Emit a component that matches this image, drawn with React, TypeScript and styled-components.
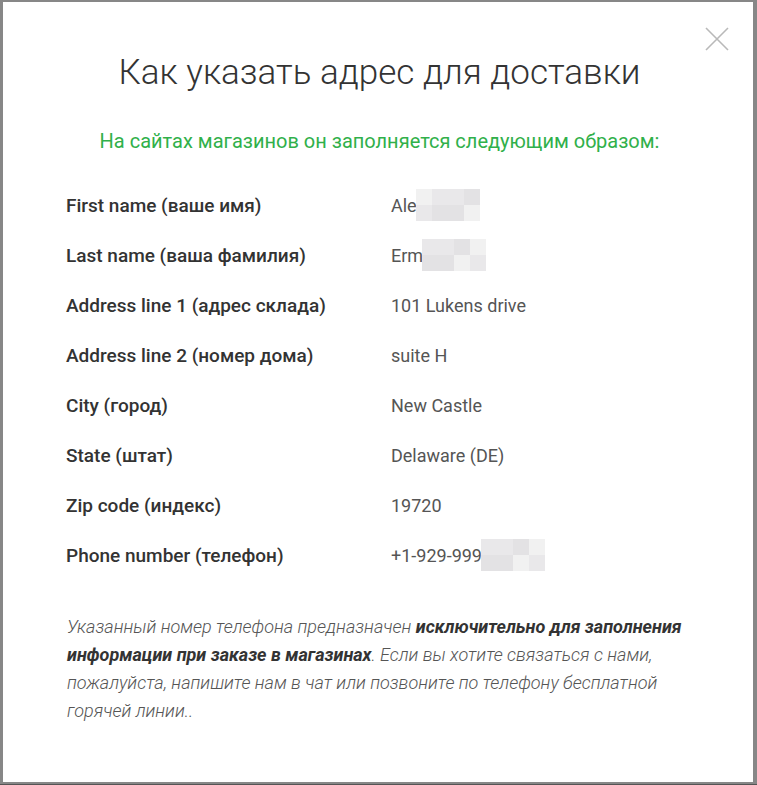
import React from 'react';
import styled, { createGlobalStyle } from 'styled-components';

const GlobalStyle = createGlobalStyle`
    html, body {
        margin: 0;
        padding: 0;
        background: #878787;
        font-family: Roboto, 'Liberation Sans', sans-serif;
    }
`;

type Field = { label: string; value: string; hidden?: number[] };

const FIELDS: Field[] = [
    { label: 'First name (ваше имя)', value: 'Ale', hidden: [0, 1, 1, 2] },
    { label: 'Last name (ваша фамилия)', value: 'Erm', hidden: [1, 1, 2, 0] },
    { label: 'Address line 1 (адрес склада)', value: '101 Lukens drive' },
    { label: 'Address line 2 (номер дома)', value: 'suite H' },
    { label: 'City (город)', value: 'New Castle' },
    { label: 'State (штат)', value: 'Delaware (DE)' },
    { label: 'Zip code (индекс)', value: '19720' },
    { label: 'Phone number (телефон)', value: '+1-929-999', hidden: [1, 1, 2, 0] },
];

const SHADES = ['#f1f1f1', '#e9e8ea', '#e3e2e4'];

const App = (): JSX.Element => {
    return (
        <Backdrop>
            <GlobalStyle />
            <Modal>
                <CloseButton aria-label="Закрыть">
                    <svg width="24" height="24" viewBox="0 0 24 24">
                        <path d="M1 1 L23 23 M23 1 L1 23" stroke="#b9b9b9" strokeWidth="1.6" fill="none" />
                    </svg>
                </CloseButton>
                <Title>Как указать адрес для доставки</Title>
                <Subtitle>На сайтах магазинов он заполняется следующим образом:</Subtitle>
                <Table>
                    {FIELDS.map((f) => (
                        <Row key={f.label}>
                            <Label>{f.label}</Label>
                            <Value>
                                {f.value}
                                {f.hidden && (
                                    <Blur>
                                        {f.hidden.map((s, i) => (
                                            <BlurCell key={i} shade={SHADES[s]} />
                                        ))}
                                        {f.hidden.map((s, i) => (
                                            <BlurCell key={'b' + i} shade={SHADES[(s + 1) % 3]} />
                                        ))}
                                    </Blur>
                                )}
                            </Value>
                        </Row>
                    ))}
                </Table>
                <Note>
                    Указанный номер телефона предназначен <b>исключительно для заполнения информации при заказе в магазинах</b>. Если вы хотите связаться с нами, пожалуйста, напишите нам в чат или позвоните по телефону бесплатной горячей линии..
                </Note>
            </Modal>
        </Backdrop>
    );
};

export default App;

const Backdrop = styled.div`
    width: 757px;
    height: 785px;
    padding: 2px 4px 2px 3px;
    box-sizing: border-box;
    border-bottom: 1px solid #555;
`;

const Modal = styled.div`
    position: relative;
    height: 100%;
    background: #fff;
    padding: 49px 60px 0 63px;
    box-sizing: border-box;
`;

const CloseButton = styled.button`
    position: absolute;
    top: 25px;
    right: 24px;
    padding: 0;
    border: none;
    background: none;
    line-height: 0;
    cursor: pointer;
`;

const Title = styled.h1`
    margin: 0 -20px;
    text-align: center;
    font-size: 35px;
    font-weight: 300;
    line-height: 44px;
    color: #333;
`;

const Subtitle = styled.p`
    margin: 34px -20px 0;
    text-align: center;
    font-size: 20px;
    line-height: 24px;
    color: #30b04a;
`;

const Table = styled.div`
    margin-top: 27px;
    display: flex;
    flex-direction: column;
`;

const Row = styled.div`
    display: grid;
    grid-template-columns: 325px 1fr;
    align-items: center;
    height: 50px;
`;

const Label = styled.span`
    font-size: 19px;
    font-weight: 500;
    color: #333;
`;

const Value = styled.span`
    display: flex;
    align-items: center;
    font-size: 18px;
    color: #555;
`;

const Blur = styled.span`
    display: grid;
    grid-template-columns: repeat(4, 16px);
    grid-auto-rows: 16px;
    margin-left: -1px;
`;

const BlurCell = styled.span<{ shade: string }>`
    background: ${(p) => p.shade};
`;

const Note = styled.p`
    margin: 33px 0 0 1px;
    font-size: 18px;
    font-style: italic;
    font-weight: 300;
    line-height: 28px;
    color: #555;

    b {
        font-weight: 700;
        color: #333;
    }
`;
